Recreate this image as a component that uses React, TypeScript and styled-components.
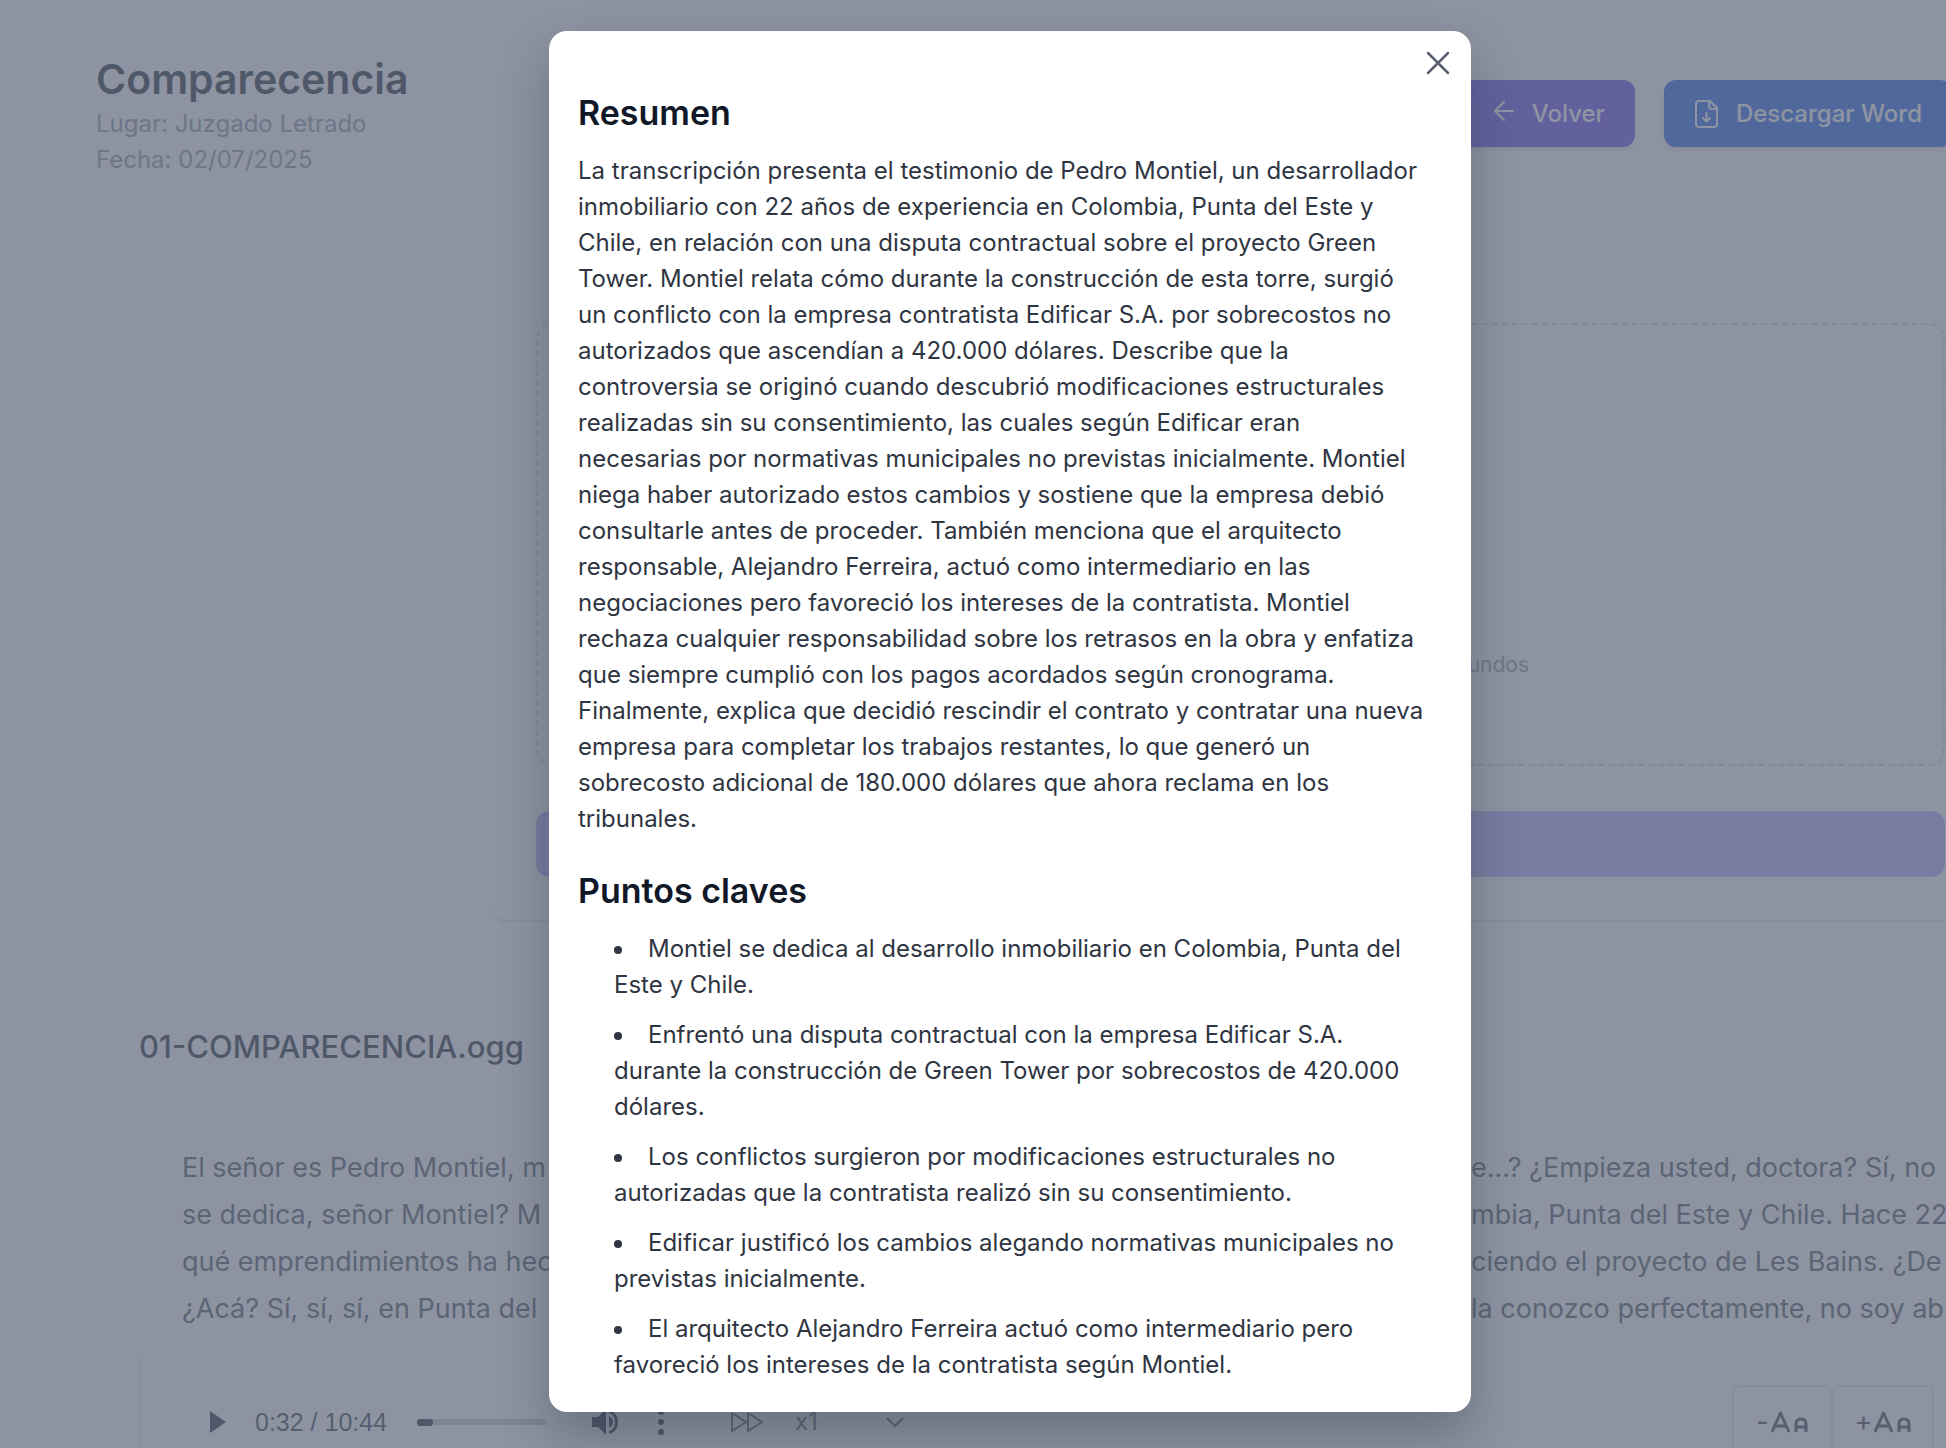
import React from 'react';
import styled, { createGlobalStyle } from 'styled-components';

const GlobalStyle = createGlobalStyle`
  *, *::before, *::after { box-sizing: border-box; }
  body { margin: 0; overflow: hidden; background: #f9fafb; font-family: Inter, "Liberation Sans", sans-serif; font-size: 24px; line-height: 36px; color: #1f2937; }
  h1, h2, p, ul { margin: 0; padding: 0; }
  button, select { font: inherit; color: inherit; }
`;

const Shell = styled.div`
  position: relative;
  width: calc(100vw + 74px);
  height: 100vh;
  overflow: hidden;
`;

const Header = styled.header`
  display: flex;
  justify-content: space-between;
  align-items: flex-start;
  padding: 52px 68px 0 96px;
  height: 275px;
`;

const PageTitle = styled.h1`
  font-size: 41px;
  line-height: 54px;
  font-weight: 600;
`;

const Meta = styled.p`
  color: #8b93a1;
`;

const Actions = styled.div`
  display: flex;
  gap: 29px;
  padding-top: 28px;
`;

const ActionButton = styled.button<{ $tone: string }>`
  display: flex;
  align-items: center;
  gap: 16px;
  height: 67px;
  padding: 0 30px;
  border: 0;
  border-radius: 12px;
  background: ${(p) => p.$tone};
  color: #fff;
  font-weight: 500;
  white-space: nowrap;
  box-shadow: 0 2px 4px rgba(0, 0, 0, 0.1);
`;

const UploadCard = styled.section`
  margin: 0 27px 0 488px;
  padding: 48px;
  height: 647px;
  border-radius: 18px;
  border-bottom: 2px solid #e5e7eb;
`;

const DropZone = styled.div`
  display: flex;
  justify-content: flex-end;
  align-items: center;
  height: 443px;
  padding: 240px 414px 0 0;
  margin-bottom: 45px;
  border: 2px dashed #d1d5db;
  border-radius: 16px;
  color: #8b93a1;
  font-size: 21px;
`;

const UploadButton = styled.button`
  display: block;
  width: 100%;
  height: 66px;
  border: 0;
  border-radius: 14px;
  background: #b4a5fc;
`;

const FileName = styled.h2`
  padding: 102px 0 0 139px;
  font-size: 31px;
  line-height: 46px;
  font-weight: 500;
`;

const Transcript = styled.div`
  padding: 74px 0 0 182px;
  color: #4b5563;
  font-size: 27px;
  line-height: 47px;
  white-space: nowrap;
`;

const Line = styled.p`
  display: grid;
  grid-template-columns: 1289px auto;
`;

const Player = styled.footer`
  display: flex;
  align-items: center;
  margin: 25px 86px 0 139px;
  padding: 0 0 0 68px;
  height: 130px;
  color: #1f2937;
  border-left: 2px solid #eceef1;
`;

const IconButton = styled.button<{ $gap: number }>`
  display: flex;
  padding: 0;
  border: 0;
  background: none;
  margin-right: ${(p) => p.$gap}px;
`;

const Time = styled.span`
  width: 162px;
  color: #374151;
  font-family: "Liberation Sans", sans-serif;
  font-size: 25px;
`;

const Seek = styled.div`
  width: 130px;
  height: 6px;
  margin-right: 44px;
  border-radius: 4px;
  background: #c3c7ce;
`;

const Played = styled.div`
  width: 16px;
  height: 7px;
  border-radius: 4px;
  background: #1f2937;
`;

const Speed = styled.label`
  display: flex;
  align-items: center;
  color: #4b5563;
`;

const SpeedSelect = styled.select`
  width: 91px;
  padding: 0;
  border: 0;
  background: none;
  appearance: none;
`;

const SizeGroup = styled.div`
  display: flex;
  margin-left: auto;
`;

const SizeButton = styled.button`
  display: flex;
  align-items: center;
  justify-content: center;
  gap: 2px;
  width: 101px;
  height: 74px;
  border: 2px solid #e5e7eb;
  border-radius: 6px;
  background: none;
  color: #374151;
  font-size: 27px;
`;

const Backdrop = styled.div`
  position: absolute;
  inset: 0;
  display: flex;
  justify-content: center;
  align-items: flex-start;
  padding-top: 31px;
  background: rgba(99, 107, 125, 0.72);
`;

const Dialog = styled.div`
  position: relative;
  width: 922px;
  padding: 60px 47px 29px 29px;
  border-radius: 18px;
  background: #fff;
  box-shadow: 0 24px 48px rgba(31, 41, 55, 0.3);
`;

const CloseButton = styled.button`
  position: absolute;
  top: 18px;
  right: 19px;
  display: flex;
  padding: 0;
  border: 0;
  background: none;
  color: #5b6070;
`;

const Heading = styled.h2`
  font-size: 34px;
  line-height: 44px;
  font-weight: 600;
  color: #111827;
`;

const Summary = styled.p`
  padding: 18px 0 32px;
  color: #2f3542;
`;

const Points = styled.ul`
  display: flex;
  flex-direction: column;
  gap: 14px;
  padding: 18px 0 0 36px;
  list-style: none;
  color: #2f3542;
`;

const Point = styled.li`
  &::before {
    content: '';
    display: inline-block;
    width: 8px;
    height: 8px;
    margin: 0 26px 3px 0;
    border-radius: 50%;
    background: currentColor;
  }
`;

const LINES = [
  ['El señor es Pedro Montiel, m', 'e...? ¿Empieza usted, doctora? Sí, no'],
  ['se dedica, señor Montiel? M', 'mbia, Punta del Este y Chile. Hace 22'],
  ['qué emprendimientos ha hec', 'ciendo el proyecto de Les Bains. ¿De'],
  ['¿Acá? Sí, sí, sí, en Punta del', 'la conozco perfectamente, no soy ab'],
];

const POINTS = [
  'Montiel se dedica al desarrollo inmobiliario en Colombia, Punta del Este y Chile.',
  'Enfrentó una disputa contractual con la empresa Edificar S.A. durante la construcción de Green Tower por sobrecostos de 420.000 dólares.',
  'Los conflictos surgieron por modificaciones estructurales no autorizadas que la contratista realizó sin su consentimiento.',
  'Edificar justificó los cambios alegando normativas municipales no previstas inicialmente.',
  'El arquitecto Alejandro Ferreira actuó como intermediario pero favoreció los intereses de la contratista según Montiel.',
];

const SUMMARY =
  'La transcripción presenta el testimonio de Pedro Montiel, un desarrollador inmobiliario con 22 años de experiencia en Colombia, Punta del Este y Chile, en relación con una disputa contractual sobre el proyecto Green Tower. Montiel relata cómo durante la construcción de esta torre, surgió un conflicto con la empresa contratista Edificar S.A. por sobrecostos no autorizados que ascendían a 420.000 dólares. Describe que la controversia se originó cuando descubrió modificaciones estructurales realizadas sin su consentimiento, las cuales según Edificar eran necesarias por normativas municipales no previstas inicialmente. Montiel niega haber autorizado estos cambios y sostiene que la empresa debió consultarle antes de proceder. También menciona que el arquitecto responsable, Alejandro Ferreira, actuó como intermediario en las negociaciones pero favoreció los intereses de la contratista. Montiel rechaza cualquier responsabilidad sobre los retrasos en la obra y enfatiza que siempre cumplió con los pagos acordados según cronograma. Finalmente, explica que decidió rescindir el contrato y contratar una nueva empresa para completar los trabajos restantes, lo que generó un sobrecosto adicional de 180.000 dólares que ahora reclama en los tribunales.';

const LetterIcon = () => (
  <svg width="38" height="22" viewBox="0 0 38 22" fill="none" stroke="currentColor" strokeWidth="3">
    <path d="M1 21 9.500 2 18 21M4 15h11" strokeLinejoin="round" />
    <path d="M25 21v-8q0-5 5-5t5 5v8M25 16h10" />
  </svg>
);

export default function App() {
  return (
    <Shell>
      <GlobalStyle />
      <Header>
        <div>
          <PageTitle>Comparecencia</PageTitle>
          <Meta>Lugar: Juzgado Letrado</Meta>
          <Meta>Fecha: 02/07/2025</Meta>
        </div>
        <Actions>
          <ActionButton type="button" $tone="#6346f0">
            <svg width="24" height="28" viewBox="0 0 24 28" fill="none" stroke="currentColor" strokeWidth="2" strokeLinecap="round" strokeLinejoin="round">
              <path d="M21 11H3M12 2 3 11l9 9" />
            </svg>
            Volver
          </ActionButton>
          <ActionButton type="button" $tone="#2563eb">
            <svg width="26" height="30" viewBox="0 0 26 30" fill="none" stroke="currentColor" strokeWidth="2" strokeLinecap="round" strokeLinejoin="round">
              <path d="M5 2h11l7 7v16a3 3 0 0 1-3 3H5a3 3 0 0 1-3-3V5a3 3 0 0 1 3-3zM15 2v5a3 3 0 0 0 3 3h5M12.500 14v8M9 19l3.500 3.500L16 19" />
            </svg>
            Descargar Word
          </ActionButton>
        </Actions>
      </Header>

      <UploadCard>
        <DropZone>segundos</DropZone>
        <UploadButton type="button" aria-label="Transcribir" disabled />
      </UploadCard>

      <FileName>01-COMPARECENCIA.ogg</FileName>
      <Transcript>
        {LINES.map(([start, end]) => (
          <Line key={start}>
            <span>{start}</span>
            <span>{end}</span>
          </Line>
        ))}
      </Transcript>

      <Player>
        <IconButton type="button" aria-label="Reproducir" $gap={28}>
          <svg width="18" height="24" viewBox="0 0 18 24" fill="currentColor"><path d="M1 1 17 12 1 23z" /></svg>
        </IconButton>
        <Time>0:32 / 10:44</Time>
        <Seek><Played /></Seek>
        <IconButton type="button" aria-label="Volumen" $gap={39}>
          <svg width="28" height="28" viewBox="0 0 28 28" fill="currentColor">
            <path d="M1 9v10h6l8 8V1L7 9zM18 8v12q4-2 4-6t-4-6z" />
            <path d="M18 2q9 3 9 12t-9 12v-3q6-2 6-9t-6-9z" />
          </svg>
        </IconButton>
        <IconButton type="button" aria-label="Más opciones" $gap={65}>
          <svg width="6" height="26" viewBox="0 0 6 26" fill="currentColor"><circle cx="3" cy="3" r="3" /><circle cx="3" cy="13" r="3" /><circle cx="3" cy="23" r="3" /></svg>
        </IconButton>
        <Speed>
          <svg width="66" height="24" viewBox="0 0 66 24" fill="none" stroke="currentColor" strokeWidth="2" strokeLinejoin="round">
            <path d="M3 3v18l14-9zM19 3v18l14-9z" />
          </svg>
          <SpeedSelect aria-label="Velocidad"><option>x1</option></SpeedSelect>
          <svg width="18" height="12" viewBox="0 0 18 12" fill="none" stroke="currentColor" strokeWidth="2"><path d="m1 2 8 8 8-8" /></svg>
        </Speed>
        <SizeGroup>
          <SizeButton type="button" aria-label="Reducir texto">-<LetterIcon /></SizeButton>
          <SizeButton type="button" aria-label="Aumentar texto">+<LetterIcon /></SizeButton>
        </SizeGroup>
      </Player>

      <Backdrop>
        <Dialog role="dialog" aria-modal="true" aria-labelledby="resumen">
          <CloseButton type="button" aria-label="Cerrar">
            <svg width="28" height="28" viewBox="0 0 28 28" fill="none" stroke="currentColor" strokeWidth="2.500" strokeLinecap="round"><path d="m4 4 20 20M24 4 4 24" /></svg>
          </CloseButton>
          <Heading id="resumen">Resumen</Heading>
          <Summary>{SUMMARY}</Summary>
          <Heading>Puntos claves</Heading>
          <Points>{POINTS.map((p) => <Point key={p}>{p}</Point>)}</Points>
        </Dialog>
      </Backdrop>
    </Shell>
  );
}
